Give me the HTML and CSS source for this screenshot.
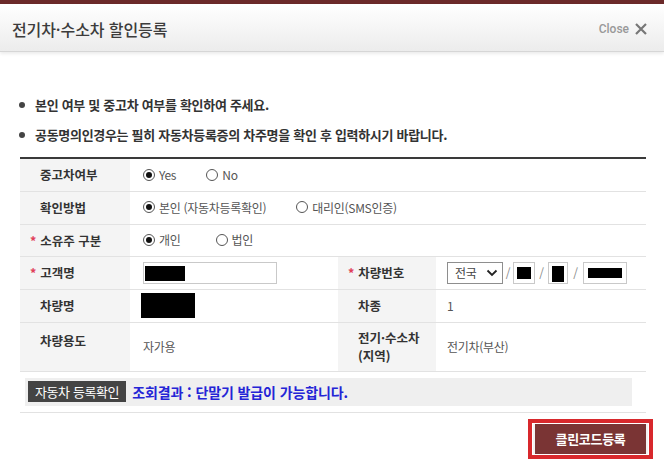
FILE: index.html
```html
<!DOCTYPE html>
<html lang="ko">
<head>
  <meta charset="UTF-8">
  <title>전기차·수소차 할인등록</title>
  <link rel="stylesheet" href="styles.css">
</head>
<body>
  <div class="topbar"></div>
  <header class="header">
    <h1>전기차·수소차 할인등록</h1>
    <a class="close">Close
      <svg width="14" height="14" viewBox="0 0 14 14"><path d="M2 2L12 12M12 2L2 12" stroke="#777" stroke-width="2.2" fill="none"/></svg>
    </a>
  </header>

  <ul class="notice">
    <li>본인 여부 및 중고차 여부를 확인하여 주세요.</li>
    <li>공동명의인경우는 필히 자동차등록증의 차주명을 확인 후 입력하시기 바랍니다.</li>
  </ul>

  <table class="form">
    <colgroup>
      <col style="width:110px"><col style="width:208px"><col style="width:98px"><col>
    </colgroup>
    <tr class="r1">
      <th>중고차여부</th>
      <td colspan="3">
        <span class="radio on"><i></i>Yes</span>
        <span class="radio"><i></i>No</span>
      </td>
    </tr>
    <tr class="r1">
      <th>확인방법</th>
      <td colspan="3">
        <span class="radio on"><i></i>본인 (자동차등록확인)</span>
        <span class="radio"><i></i>대리인(SMS인증)</span>
      </td>
    </tr>
    <tr class="r0">
      <th><em>*</em>소유주 구분</th>
      <td colspan="3">
        <span class="radio on wide"><i></i>개인</span>
        <span class="radio"><i></i>법인</span>
      </td>
    </tr>
    <tr class="r1">
      <th><em>*</em>고객명</th>
      <td><div class="input name"><b></b></div></td>
      <th class="th2"><em>*</em>차량번호</th>
      <td>
        <div class="plate">
          <div class="select">전국
            <svg width="12" height="8" viewBox="0 0 12 8"><path d="M1.5 1.5L6 6L10.5 1.5" stroke="#222" stroke-width="1.8" fill="none"/></svg>
          </div>
          <span class="slash s1">/</span>
          <div class="input p1"><b></b></div>
          <span class="slash s2">/</span>
          <div class="input p2"><b></b></div>
          <span class="slash s3">/</span>
          <div class="input p3"><b></b></div>
        </div>
      </td>
    </tr>
    <tr class="r1">
      <th>차량명</th>
      <td><div class="redact"></div></td>
      <th class="th2">차종</th>
      <td>1</td>
    </tr>
    <tr class="r2">
      <th class="top">차량용도</th>
      <td>자가용</td>
      <th class="th2 two">전기·수소차<br>(지역)</th>
      <td>전기차(부산)</td>
    </tr>
    <tr class="r3">
      <td colspan="4">
        <div class="check">
          <button class="dark">자동차 등록확인</button>
          <span class="result">조회결과 : 단말기 발급이 가능합니다.</span>
        </div>
      </td>
    </tr>
  </table>

  <div class="actions">
    <div class="mark">
      <button class="submit">클린코드등록</button>
    </div>
  </div>
</body>
</html>
```

FILE: styles.css
```css
* {
  box-sizing: border-box;
}

body {
  margin: 0;
  width: 664px;
  background: #fff;
  color: #333;
  font-family: "Noto Sans CJK KR", "Noto Sans", sans-serif;
}

.topbar {
  height: 4px;
  background: #6b2a2a;
  box-shadow: 0 1px 2px rgba(80, 20, 20, 0.5);
}

.header {
  height: 48px;
  display: flex;
  align-items: center;
  justify-content: space-between;
  padding: 2px 16px 0 12px;
  background: linear-gradient(#fff, #ececec);
  border-bottom: 1px solid #d6d6d6;
  box-shadow: 0 2px 3px rgba(0, 0, 0, 0.08);
}

.header h1 {
  margin: 0;
  font-size: 16px;
  font-weight: 500;
  color: #3c3c3c;
  letter-spacing: -0.1px;
}

.close {
  display: flex;
  align-items: center;
  gap: 5px;
  font-family: "Roboto", "Liberation Sans", sans-serif;
  font-size: 12px;
  font-weight: 500;
  color: #999;
}

.notice {
  list-style: none;
  margin: 38px 0 7px;
  padding: 0 0 0 19px;
}

.notice li {
  position: relative;
  padding-left: 16px;
  line-height: 30px;
  font-size: 13px;
  font-weight: 700;
  letter-spacing: -0.3px;
  color: #333;
}

.notice li::before {
  content: "";
  position: absolute;
  left: 0;
  top: 12px;
  width: 6px;
  height: 6px;
  border-radius: 50%;
  background: #444;
}

.form {
  width: 626px;
  margin-left: 20px;
  border-collapse: collapse;
  border-top: 2px solid #3a3a3a;
  font-size: 12px;
  letter-spacing: -0.3px;
}

.form tr {
  border-bottom: 1px solid #e2e2e2;
}

.form .r0 { height: 32px; }
.form .r1 { height: 33px; }
.form .r2 { height: 49px; }
.form .r3 { height: 41px; }

.form th {
  background: #f4f4f4;
  text-align: left;
  padding: 0 0 0 20px;
  font-size: 12.5px;
  font-weight: 700;
  letter-spacing: 0;
  color: #333;
  line-height: 17px;
}

.form th.two {
  line-height: 18px;
}

.form th.top {
  vertical-align: top;
  padding-top: 9px;
}

.form th em {
  font-style: normal;
  color: #e0405a;
  margin-left: -10px;
  margin-right: 4px;
}

.form td {
  padding: 0 0 0 13px;
  color: #555;
}

.form td + th.th2 + td {
  padding-left: 11px;
}

.radio {
  display: inline-flex;
  align-items: center;
  gap: 4px;
  margin-right: 27px;
}

.radio.wide {
  margin-right: 32px;
}

.radio i {
  position: relative;
  width: 12px;
  height: 12px;
  border: 1px solid #555;
  border-radius: 50%;
  background: #fff;
}

.radio.on i::after {
  content: "";
  position: absolute;
  left: 2px;
  top: 2px;
  width: 6px;
  height: 6px;
  border-radius: 50%;
  background: #111;
}

.input {
  height: 22px;
  border: 1px solid #c9c9c9;
  background: #fff;
  padding: 3px 0 0 1px;
}

.input b {
  display: block;
  height: 15px;
  background: #000;
}

.input.name {
  width: 134px;
}

.input.name b {
  width: 40px;
}

.redact {
  width: 54px;
  height: 25px;
  margin-left: -2px;
  background: #000;
}

.plate {
  display: flex;
  align-items: center;
}

.select {
  width: 56px;
  height: 22px;
  display: flex;
  align-items: center;
  justify-content: space-between;
  padding: 0 4px 0 7px;
  border: 1px solid #8e8e8e;
  color: #444;
}

.slash {
  text-align: center;
  color: #888;
}

.slash.s1 { width: 10px; }
.slash.s2 { width: 13px; }
.slash.s3 { width: 15px; }

.input.p1 { width: 22px; padding: 4px 3px 0; }
.input.p2 { width: 20px; padding: 3px 3px 0; }
.input.p3 { width: 44px; padding: 5px 4px 0; }
.input.p1 b { height: 12px; }
.input.p2 b { height: 16px; }
.input.p3 b { height: 10px; }

.form .r3 td {
  padding: 0 14px 0 5px;
}

.check {
  height: 28px;
  display: flex;
  align-items: center;
  gap: 6px;
  padding-left: 3px;
  background: #efefef;
}

.dark {
  height: 21px;
  padding: 0 7px;
  border: none;
  background: #444;
  color: #fff;
  font-family: "Noto Sans CJK KR", sans-serif;
  font-size: 13px;
  letter-spacing: -0.4px;
}

.result {
  font-weight: 700;
  font-size: 14px;
  letter-spacing: -0.1px;
  color: #2424d6;
}

.actions {
  display: flex;
  justify-content: flex-end;
  padding: 6px 11px 0 0;
}

.mark {
  border: 4px solid #d8282c;
  padding: 1px;
}

.submit {
  width: 115px;
  height: 30px;
  border: none;
  border-left: 2px solid #f2f2f2;
  border-right: 2px solid #f2f2f2;
  background: #7a3434;
  color: #fff;
  font-family: "Noto Sans CJK KR", sans-serif;
  font-size: 13px;
  font-weight: 700;
  letter-spacing: -0.3px;
}
```
